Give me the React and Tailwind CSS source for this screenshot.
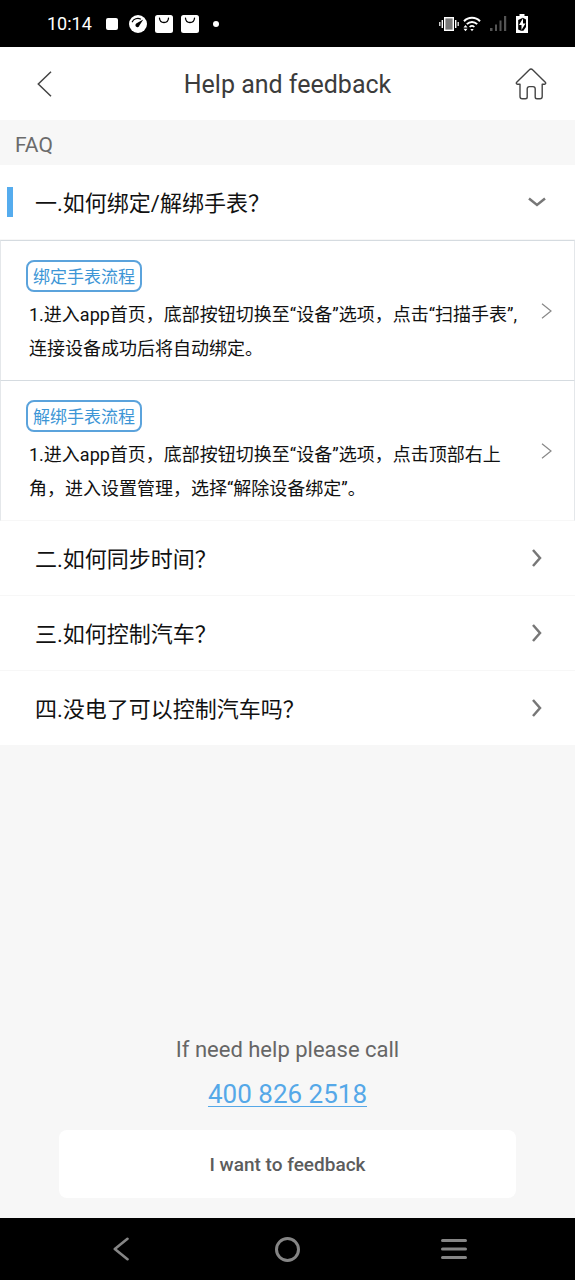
import React, { useState } from 'react';

const questions = [
  {
    title: '一.如何绑定/解绑手表？',
    steps: [
      {
        tag: '绑定手表流程',
        text: '1.进入app首页，底部按钮切换至“设备”选项，点击“扫描手表”,\n连接设备成功后将自动绑定。',
      },
      {
        tag: '解绑手表流程',
        text: '1.进入app首页，底部按钮切换至“设备”选项，点击顶部右上\n角，进入设置管理，选择“解除设备绑定”。',
      },
    ],
  },
  { title: '二.如何同步时间？', steps: [] },
  { title: '三.如何控制汽车？', steps: [] },
  { title: '四.没电了可以控制汽车吗？', steps: [] },
];

const BagIcon = () => (
  <svg width="18" height="18" viewBox="0 0 18 18" fill="none">
    <rect width="18" height="18" rx="2.5" fill="#fff" />
    <path d="M4.500 3.200c.3 2.800 2 4.300 4.500 4.300s4.200-1.500 4.500-4.300" stroke="#000" strokeWidth="1.300" strokeLinecap="round" />
  </svg>
);

const GaugeIcon = () => (
  <svg width="18" height="18" viewBox="0 0 18 18" fill="none">
    <circle cx="9" cy="9" r="9" fill="#fff" />
    <path d="M3.300 6.800C4.600 3.900 8.500 2.600 11.500 4" stroke="#000" strokeWidth="1.200" strokeLinecap="round" />
    <path d="M14.300 4.600 10.400 10.400A2 2 0 1 1 7.600 8.300Z" fill="#000" />
  </svg>
);

const VibrateIcon = () => (
  <svg width="20" height="14" viewBox="0 0 20 14" fill="none">
    <rect x="5.700" y=".7" width="8.600" height="12.600" fill="#777" stroke="#fff" strokeWidth="1.400" />
    <path d="M3.300 3v8M16.700 3v8" stroke="#fff" strokeWidth="1.400" />
    <path d="M.8 5v4M19.200 5v4" stroke="#fff" strokeWidth="1.200" />
  </svg>
);

const WifiIcon = () => (
  <svg width="18" height="16" viewBox="0 0 18 16" fill="none">
    <path d="M1 5.200C5.400.6 12.600.6 17 5.200" stroke="#fff" strokeWidth="2" />
    <path d="M3.800 8.200c3-3 7.400-3 10.400 0" stroke="#fff" strokeWidth="1.900" />
    <path d="M6.600 11c1.500-1.400 3.300-1.400 4.800 0" stroke="#fff" strokeWidth="1.700" />
    <path d="M7.300 13h3.400L9 15.300Z" fill="#fff" />
    <path d="M.5 11.500 2.500 9l2 2.500ZM.5 12.700l2 2.600 2-2.600Z" fill="#fff" />
  </svg>
);

const SignalIcon = () => (
  <svg width="17" height="16" viewBox="0 0 17 16" fill="#555">
    <rect x="0" y="12" width="2.500" height="3" />
    <rect x="5" y="8.500" width="2" height="6.500" />
    <rect x="9.500" y="4.500" width="2" height="10.500" />
    <rect x="14" y="0" width="2.200" height="15" />
  </svg>
);

const BatteryIcon = () => (
  <svg width="12" height="19" viewBox="0 0 12 19" fill="none">
    <path d="M3.500 0h5v2H12v17H0V2h3.500Z" fill="#fff" />
    <path d="M6.800 3.800 2.200 6v9.500L5 16.800h2.400L10 13V5.500Z" fill="#000" />
    <path d="M7 4.300 3 11h2.500v5L9.500 9.500H7Z" fill="#fff" />
  </svg>
);

const HomeIcon = () => (
  <svg width="32" height="32" viewBox="0 0 32 32" fill="none" stroke="#444" strokeWidth="1.400" strokeLinejoin="round">
    <path d="M14.400 1.700a2.200 2.200 0 0 1 3.200 0L30.300 14.300c.8.900.4 1.900-.7 1.900h-2.400v12.300c0 1.500-.7 2.300-2.200 2.300h-3c-1.200 0-1.800-.6-1.800-1.800v-8.200c0-1.400-.8-2.200-2.200-2.200h-3.600c-1.400 0-2.200.8-2.200 2.200V29c0 1.200-.6 1.800-1.800 1.800H7.300c-1.500 0-2.300-.8-2.300-2.300V16.200H2.400c-1.100 0-1.500-1-.7-1.900Z" />
  </svg>
);

const StatusBar = () => (
  <div className="h-[47px] bg-black text-white flex items-center justify-between px-[47px]">
    <div className="flex items-center">
      <span className="text-[18px] leading-6">10:14</span>
      <span className="w-3 h-3 bg-white rounded-[2px] ml-[14px]" />
      <div className="flex items-center gap-2 ml-[11px]">
        <GaugeIcon />
        <BagIcon />
        <BagIcon />
      </div>
      <span className="w-1.5 h-1.5 bg-white rounded-full ml-[14px]" />
    </div>
    <div className="flex items-center">
      <VibrateIcon />
      <span className="ml-1"><WifiIcon /></span>
      <span className="ml-[9px]"><SignalIcon /></span>
      <span className="ml-[9px]"><BatteryIcon /></span>
    </div>
  </div>
);

const Header = () => (
  <header className="h-[73px] bg-white flex items-center justify-between px-7">
    <button aria-label="Back" className="w-8 h-8 flex items-center justify-center">
      <svg width="15" height="26" viewBox="0 0 15 26" fill="none" stroke="#444" strokeWidth="1.500">
        <path d="M14 .8 1.300 13 14 25.200" />
      </svg>
    </button>
    <h1 className="pt-0.5 text-[25px] leading-8 text-[#3c3c3c]">Help and feedback</h1>
    <button aria-label="Home" className="w-8 h-8 flex items-center justify-center">
      <HomeIcon />
    </button>
  </header>
);

const Step = ({ step }) => (
  <button className="w-full min-h-[140px] last:min-h-[141px] flex items-center text-left border-t border-x last:border-b border-t-[#d5dbe0] border-x-[#e4e7ea] border-b-[#f7f7f7] pl-[25px] pr-[22px] bg-white">
    <span className="flex-1 flex flex-col items-start pt-1">
      <span className="h-8 flex items-center border-2 border-[#5ba3dc] rounded-lg px-[5px] pt-0.5 text-[17px] leading-6 text-[#3d96d6]">
        {step.tag}
      </span>
      <span className="pl-[3px] mt-1.5 text-[18px] leading-[34px] text-[#111] whitespace-pre-line">{step.text}</span>
    </span>
    <svg width="11" height="16" viewBox="0 0 11 16" fill="none" stroke="#888" strokeWidth="1.200">
      <path d="M1 .8 10 8 1 15.200" />
    </svg>
  </button>
);

const Question = ({ question, open, onToggle }) => (
  <li className="bg-white">
    <button
      onClick={onToggle}
      aria-expanded={open}
      className="w-full h-[75px] flex items-center text-left pl-[7px] pr-7 border-b border-[#f7f7f7]"
    >
      <span className={open ? 'w-1.5 h-[30px] bg-[#55acee]' : 'w-1.5 h-[30px]'} />
      <span className="flex-1 ml-[22px] pt-1 text-[22px] leading-8 text-[#111]">{question.title}</span>
      <svg width="20" height="20" viewBox="0 0 20 20" fill="none" stroke="#777" strokeWidth="2.500">
        {open ? <path d="M2 6.500 10 13l8-6.500" /> : <path d="M6 2 13 10l-7 8" />}
      </svg>
    </button>
    {open && question.steps.map((step) => <Step key={step.tag} step={step} />)}
  </li>
);

const NavBar = () => (
  <nav className="h-[62px] bg-black flex items-center justify-around px-[38px]">
    <button aria-label="Back" className="w-8 h-8 flex items-center justify-center">
      <svg width="16" height="24" viewBox="0 0 16 24" fill="none" stroke="#858585" strokeWidth="2.600" strokeLinecap="round" strokeLinejoin="round">
        <path d="M14.500 1.800 1.800 12l12.700 10.200" />
      </svg>
    </button>
    <button aria-label="Home" className="w-8 h-8 flex items-center justify-center">
      <span className="w-[25px] h-[25px] rounded-full border-3 border-[#858585]" />
    </button>
    <button aria-label="Recent apps" className="w-8 h-8 flex items-center justify-center">
      <svg width="26" height="20" viewBox="0 0 26 20" stroke="#858585" strokeWidth="3" strokeLinecap="round">
        <path d="M1.500 1.500h23M1.500 10h23M1.500 18.500h23" />
      </svg>
    </button>
  </nav>
);

const App = () => {
  const [openIndex, setOpenIndex] = useState(0);

  return (
    <div lang="zh-CN" className="min-h-screen flex flex-col bg-[#f7f7f7] font-['Roboto','Noto_Sans_CJK_SC',sans-serif]">
      <StatusBar />
      <Header />
      <main className="flex-1 flex flex-col">
        <h2 className="h-[45px] flex items-center pl-[15px] pt-1 text-[21px] leading-6 text-[#6b6b6b]">FAQ</h2>
        <ul>
          {questions.map((question, i) => (
            <Question
              key={question.title}
              question={question}
              open={openIndex === i}
              onToggle={() => setOpenIndex(openIndex === i ? -1 : i)}
            />
          ))}
        </ul>
        <div className="mt-auto px-[59px] pb-5 flex flex-col items-center">
          <p className="text-[22px] leading-8 text-[#666]">If need help please call</p>
          <a
            href="tel:4008262518"
            className="mt-3 text-[26px] leading-8 text-[#55a8e8] underline decoration-[#55a8e8] decoration-1 underline-offset-3"
          >
            400 826 2518
          </a>
          <button className="w-full h-[68px] mt-5 pt-0.5 bg-white rounded-lg text-[19px] font-medium text-[#5c5c5c]">
            I want to feedback
          </button>
        </div>
      </main>
      <NavBar />
    </div>
  );
};

export default App;
